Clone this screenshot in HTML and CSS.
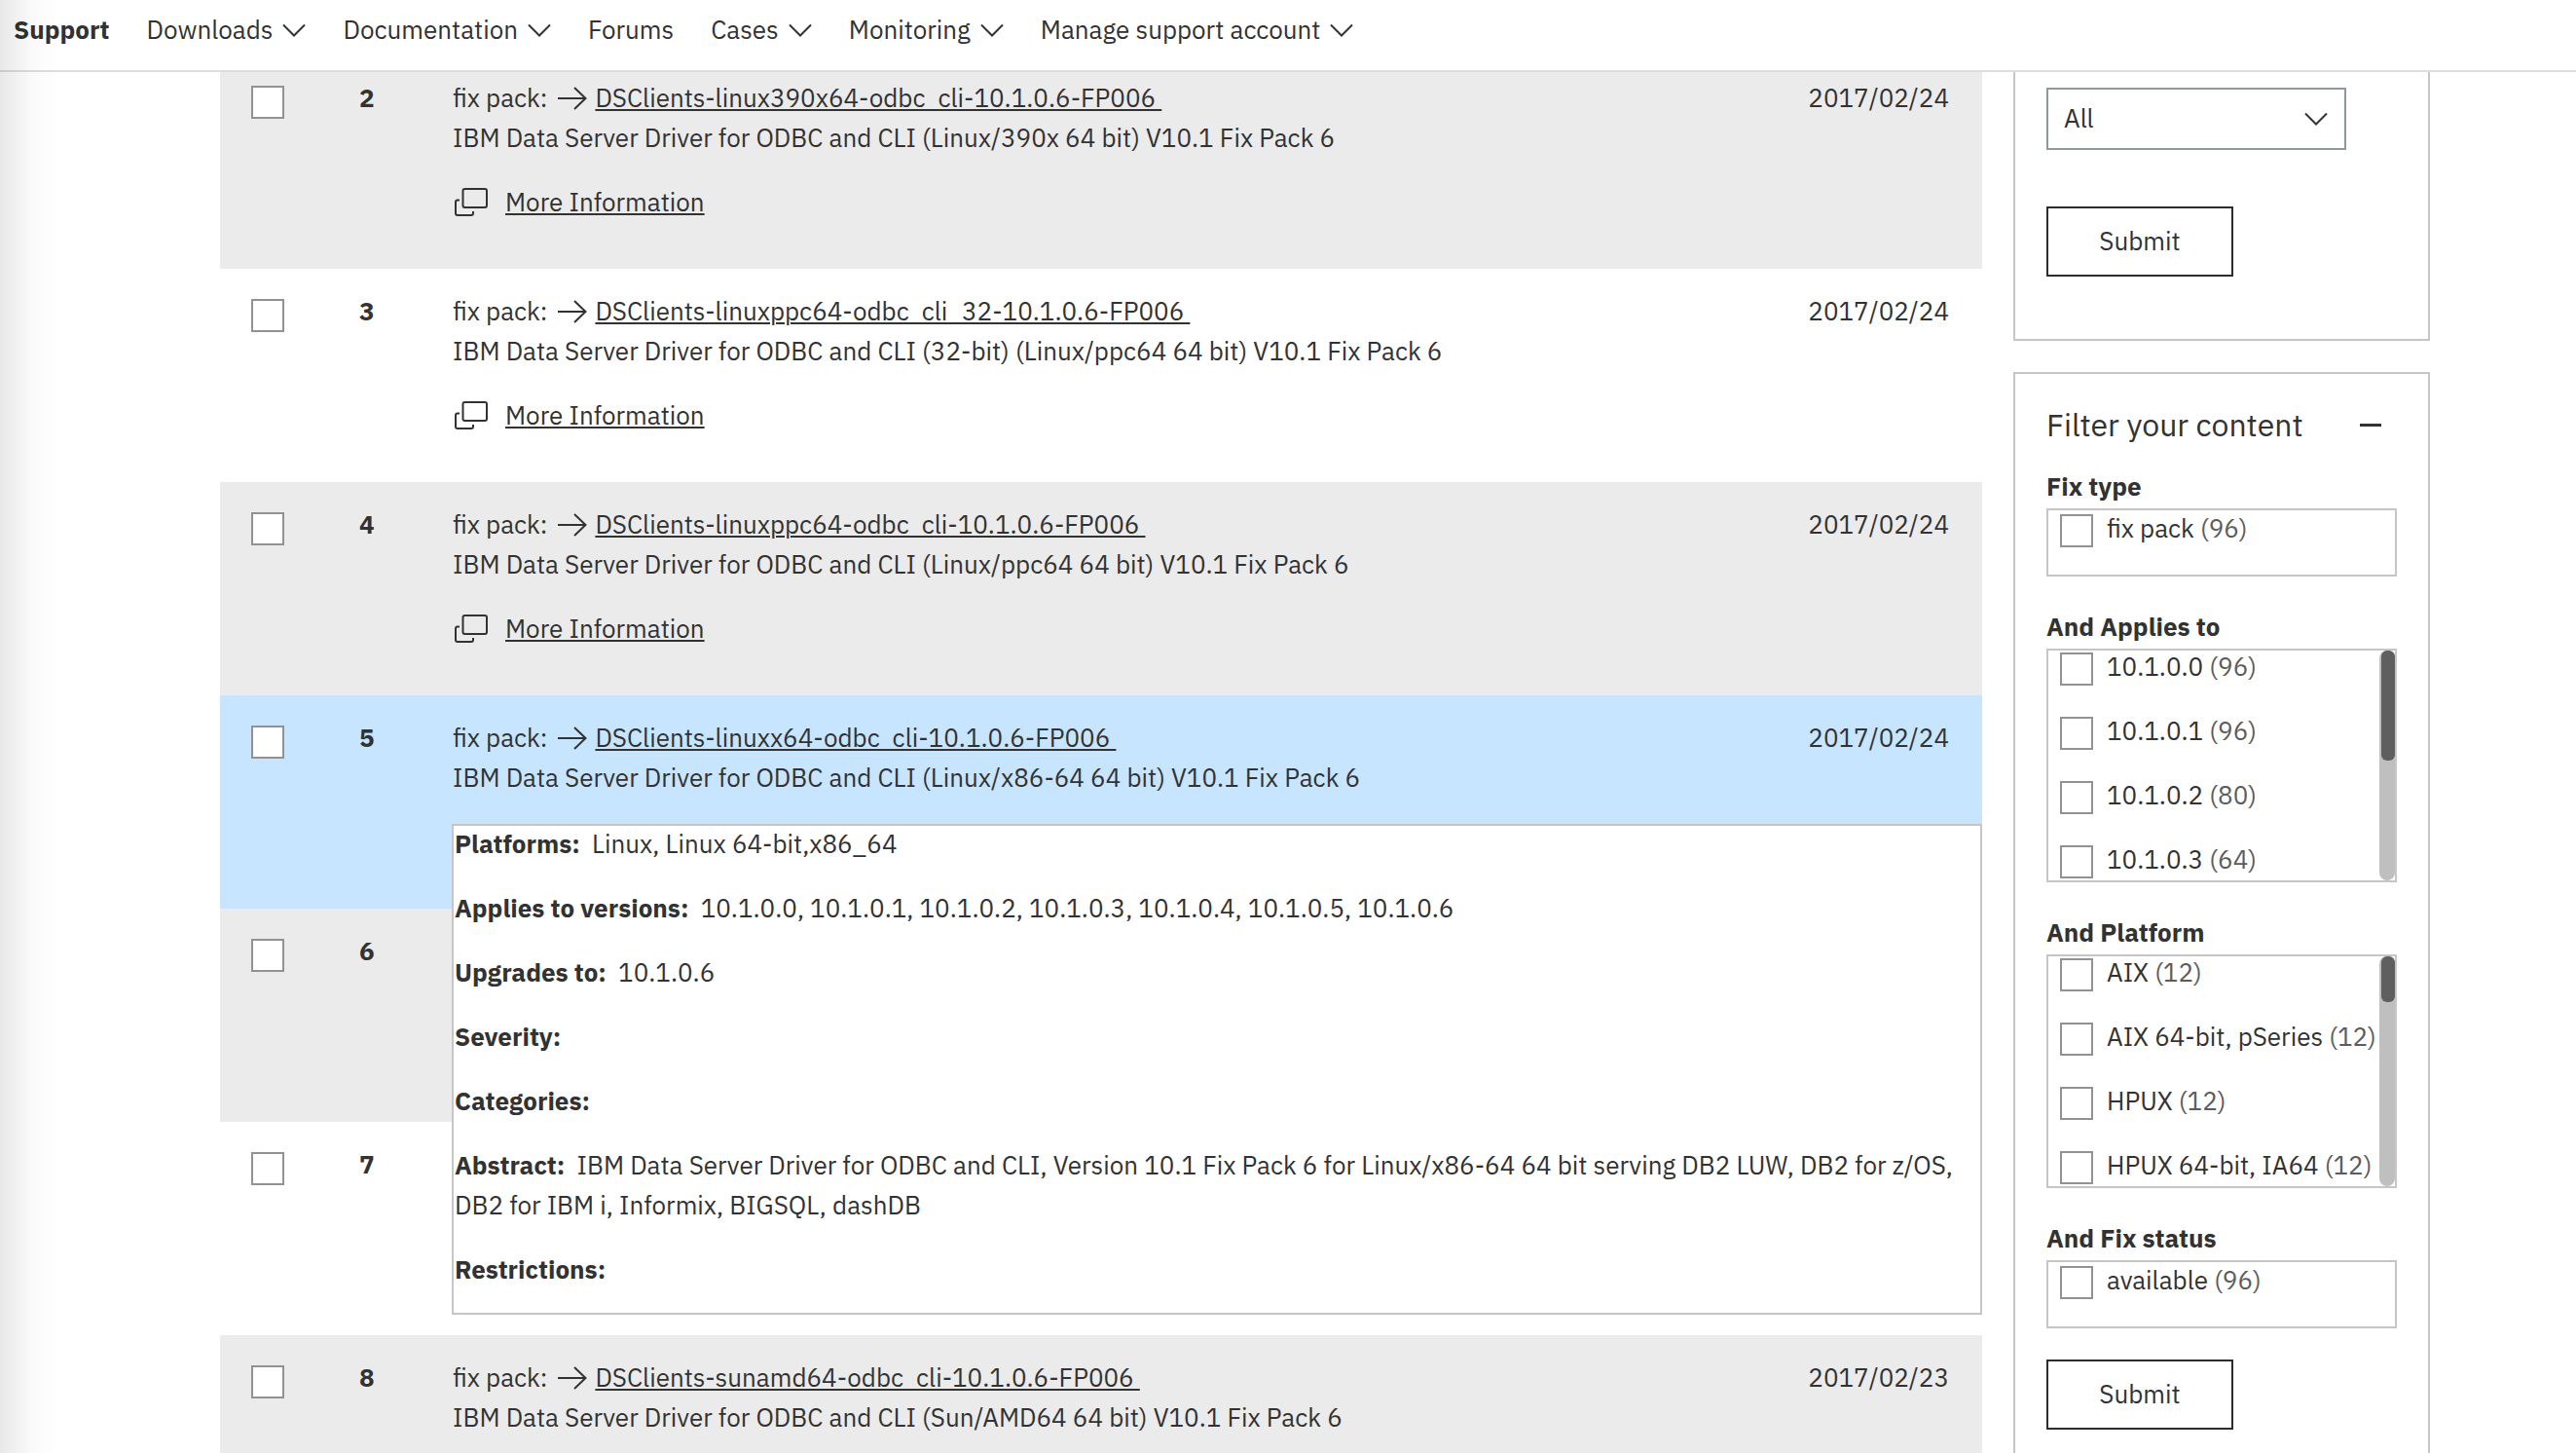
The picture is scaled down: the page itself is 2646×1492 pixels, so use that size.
FILE: index.html
```html
<!DOCTYPE html>
<html lang="en">
<head>
<meta charset="utf-8">
<meta name="viewport" content="width=device-width, initial-scale=1">
<title>Fix Central - Select fixes</title>
<link rel="stylesheet" href="styles.css">
</head>
<body>
<svg class="sprite" aria-hidden="true">
  <symbol id="chevron" viewBox="0 0 24 14"><path d="M1 1.5 12 12.5 23 1.5"/></symbol>
  <symbol id="arrow" viewBox="0 0 30 24"><path d="M0 12H28M17 1 28.500 12 17 23"/></symbol>
  <symbol id="windows" viewBox="0 0 34 29"><path d="M10.500 1H31a2 2 0 0 1 2 2V18a2 2 0 0 1-2 2H10.500a2 2 0 0 1-2-2V3a2 2 0 0 1 2-2ZM5 12.500H3a2 2 0 0 0-2 2V26a2 2 0 0 0 2 2H17a2 2 0 0 0 2-2V24"/></symbol>
</svg>

<header class="masthead">
  <nav class="nav" aria-label="Support">
    <a class="nav-link nav-title" href="#">Support</a>
    <button class="nav-link" type="button">Downloads <svg class="icon chevron"><use href="#chevron"/></svg></button>
    <button class="nav-link" type="button">Documentation <svg class="icon chevron"><use href="#chevron"/></svg></button>
    <a class="nav-link" href="#">Forums</a>
    <button class="nav-link" type="button">Cases <svg class="icon chevron"><use href="#chevron"/></svg></button>
    <button class="nav-link" type="button">Monitoring <svg class="icon chevron"><use href="#chevron"/></svg></button>
    <button class="nav-link" type="button">Manage support account <svg class="icon chevron"><use href="#chevron"/></svg></button>
  </nav>
</header>

<div class="page">
  <main class="results">
    <table class="fixes">
      <colgroup><col class="col-check"><col class="col-number"><col><col class="col-date"></colgroup>
      <tbody>
        <tr class="shaded">
          <td class="check"><input class="box" type="checkbox" aria-label="Select fix 2"></td>
          <td class="number">2</td>
          <td>
            <p class="fix">fix pack: <svg class="icon arrow"><use href="#arrow"/></svg><a href="#">DSClients-linux390x64-odbc_cli-10.1.0.6-FP006&nbsp;</a></p>
            <p>IBM Data Server Driver for ODBC and CLI (Linux/390x 64 bit) V10.1 Fix Pack 6</p>
            <p class="more"><svg class="icon windows"><use href="#windows"/></svg><a href="#">More Information</a></p>
          </td>
          <td class="date">2017/02/24</td>
        </tr>
        <tr>
          <td class="check"><input class="box" type="checkbox" aria-label="Select fix 3"></td>
          <td class="number">3</td>
          <td>
            <p class="fix">fix pack: <svg class="icon arrow"><use href="#arrow"/></svg><a href="#">DSClients-linuxppc64-odbc_cli_32-10.1.0.6-FP006&nbsp;</a></p>
            <p>IBM Data Server Driver for ODBC and CLI (32-bit) (Linux/ppc64 64 bit) V10.1 Fix Pack 6</p>
            <p class="more"><svg class="icon windows"><use href="#windows"/></svg><a href="#">More Information</a></p>
          </td>
          <td class="date">2017/02/24</td>
        </tr>
        <tr class="shaded">
          <td class="check"><input class="box" type="checkbox" aria-label="Select fix 4"></td>
          <td class="number">4</td>
          <td>
            <p class="fix">fix pack: <svg class="icon arrow"><use href="#arrow"/></svg><a href="#">DSClients-linuxppc64-odbc_cli-10.1.0.6-FP006&nbsp;</a></p>
            <p>IBM Data Server Driver for ODBC and CLI (Linux/ppc64 64 bit) V10.1 Fix Pack 6</p>
            <p class="more"><svg class="icon windows"><use href="#windows"/></svg><a href="#">More Information</a></p>
          </td>
          <td class="date">2017/02/24</td>
        </tr>
        <tr class="active">
          <td class="check"><input class="box" type="checkbox" aria-label="Select fix 5"></td>
          <td class="number">5</td>
          <td>
            <p class="fix">fix pack: <svg class="icon arrow"><use href="#arrow"/></svg><a href="#">DSClients-linuxx64-odbc_cli-10.1.0.6-FP006&nbsp;</a></p>
            <p>IBM Data Server Driver for ODBC and CLI (Linux/x86-64 64 bit) V10.1 Fix Pack 6</p>
            <div class="details">
              <p><strong>Platforms:</strong> Linux, Linux 64-bit,x86_64</p>
              <p><strong>Applies to versions:</strong> 10.1.0.0, 10.1.0.1, 10.1.0.2, 10.1.0.3, 10.1.0.4, 10.1.0.5, 10.1.0.6</p>
              <p><strong>Upgrades to:</strong> 10.1.0.6</p>
              <p><strong>Severity:</strong></p>
              <p><strong>Categories:</strong></p>
              <p><strong>Abstract:</strong> IBM Data Server Driver for ODBC and CLI, Version 10.1 Fix Pack 6 for Linux/x86-64 64 bit serving DB2 LUW, DB2 for z/OS, DB2 for IBM i, Informix, BIGSQL, dashDB</p>
              <p><strong>Restrictions:</strong></p>
            </div>
          </td>
          <td class="date">2017/02/24</td>
        </tr>
        <tr class="shaded">
          <td class="check"><input class="box" type="checkbox" aria-label="Select fix 6"></td>
          <td class="number">6</td>
          <td></td>
          <td class="date"></td>
        </tr>
        <tr>
          <td class="check"><input class="box" type="checkbox" aria-label="Select fix 7"></td>
          <td class="number">7</td>
          <td></td>
          <td class="date"></td>
        </tr>
        <tr class="shaded">
          <td class="check"><input class="box" type="checkbox" aria-label="Select fix 8"></td>
          <td class="number">8</td>
          <td>
            <p class="fix">fix pack: <svg class="icon arrow"><use href="#arrow"/></svg><a href="#">DSClients-sunamd64-odbc_cli-10.1.0.6-FP006&nbsp;</a></p>
            <p>IBM Data Server Driver for ODBC and CLI (Sun/AMD64 64 bit) V10.1 Fix Pack 6</p>
          </td>
          <td class="date">2017/02/23</td>
        </tr>
      </tbody>
    </table>
  </main>

  <aside class="sidebar">
    <form class="card card-sort">
      <div class="select-wrap">
        <select class="select" aria-label="Show"><option>All</option></select>
        <svg class="icon chevron"><use href="#chevron"/></svg>
      </div>
      <button class="submit" type="button">Submit</button>
    </form>

    <form class="card card-filter">
      <div class="card-head">
        <h2>Filter your content</h2>
        <button class="collapse" type="button" aria-label="Collapse"></button>
      </div>

      <fieldset class="group">
        <legend>Fix type</legend>
        <div class="options">
          <label class="option"><input class="box" type="checkbox"><span class="label">fix pack <span class="count">(96)</span></span></label>
        </div>
      </fieldset>

      <fieldset class="group">
        <legend>And Applies to</legend>
        <div class="options scrolling">
          <label class="option"><input class="box" type="checkbox"><span class="label">10.1.0.0 <span class="count">(96)</span></span></label>
          <label class="option"><input class="box" type="checkbox"><span class="label">10.1.0.1 <span class="count">(96)</span></span></label>
          <label class="option"><input class="box" type="checkbox"><span class="label">10.1.0.2 <span class="count">(80)</span></span></label>
          <label class="option"><input class="box" type="checkbox"><span class="label">10.1.0.3 <span class="count">(64)</span></span></label>
          <span class="track"><span class="thumb" style="height:48%"></span></span>
        </div>
      </fieldset>

      <fieldset class="group">
        <legend>And Platform</legend>
        <div class="options scrolling">
          <label class="option"><input class="box" type="checkbox"><span class="label">AIX <span class="count">(12)</span></span></label>
          <label class="option"><input class="box" type="checkbox"><span class="label">AIX 64-bit, pSeries <span class="count">(12)</span></span></label>
          <label class="option"><input class="box" type="checkbox"><span class="label">HPUX <span class="count">(12)</span></span></label>
          <label class="option"><input class="box" type="checkbox"><span class="label">HPUX 64-bit, IA64 <span class="count">(12)</span></span></label>
          <span class="track"><span class="thumb" style="height:20%"></span></span>
        </div>
      </fieldset>

      <fieldset class="group">
        <legend>And Fix status</legend>
        <div class="options">
          <label class="option"><input class="box" type="checkbox"><span class="label">available <span class="count">(96)</span></span></label>
        </div>
      </fieldset>

      <button class="submit" type="button">Submit</button>
    </form>
  </aside>
</div>
</body>
</html>
```
FILE: styles.css
```css
* {
  box-sizing: border-box;
}

body {
  margin: 0;
  height: 100vh;
  overflow: hidden;
  background: #fff;
  color: #323232;
  font: 26px/41px "IBM Plex Sans", Roboto, "Liberation Sans", sans-serif;
}

/* Soft shadow down the left edge of the window */
body::before {
  content: "";
  position: fixed;
  inset: 0 auto 0 0;
  z-index: 3;
  width: 60px;
  background: linear-gradient(to right, rgba(0, 0, 0, 0.09), rgba(0, 0, 0, 0.02) 55%, rgba(0, 0, 0, 0));
  pointer-events: none;
}

p,
h2 {
  margin: 0;
}

a {
  color: inherit;
}

button,
select {
  color: inherit;
  font: inherit;
}

.sprite {
  position: absolute;
  width: 0;
  height: 0;
}

.icon {
  flex: none;
  fill: none;
  stroke: currentColor;
  stroke-width: 2;
}

.chevron {
  width: 24px;
  height: 14px;
}

.arrow {
  width: 30px;
  height: 24px;
}

.windows {
  width: 34px;
  height: 29px;
}

/* Header */

.masthead {
  position: relative;
  z-index: 2;
  height: 74px;
  background: #fff;
  border-bottom: 2px solid #dedede;
}

.nav {
  display: flex;
  gap: 38px;
  padding: 10px 14px;
}

.nav-link {
  display: flex;
  align-items: center;
  gap: 10px;
  padding: 0;
  border: 0;
  background: none;
  text-decoration: none;
}

.nav-title {
  font-weight: 700;
}

/* Page */

.page {
  display: flex;
  align-items: flex-start;
  gap: 32px;
  margin-top: -17px;
  padding: 0 150px 0 226px;
}

.results {
  flex: 1;
}

.fixes {
  width: 100%;
  border-collapse: collapse;
  table-layout: fixed;
}

.col-check {
  width: 143px;
}

.col-number {
  width: 96px;
}

.col-date {
  width: 220px;
}

.fixes tr {
  position: relative;
  height: 219px;
}

.fixes td {
  padding: 23px 0 0;
  vertical-align: top;
}

.fixes .check {
  padding: 31px 0 0 32px;
}

.fixes .number {
  font-weight: 700;
}

.fixes .date {
  padding-right: 34px;
  text-align: right;
}

.shaded {
  background: #ebebeb;
}

.active {
  background: #c7e5ff;
}

.fix {
  display: flex;
  align-items: center;
  gap: 8px;
}

.fix .arrow {
  margin-left: 3px;
}

.fixes a {
  text-decoration-thickness: 2px;
  text-underline-offset: 2px;
}

.more {
  display: flex;
  align-items: center;
  gap: 18px;
  margin-top: 25px;
  padding-left: 2px;
}

.box {
  appearance: none;
  display: block;
  flex: none;
  width: 34px;
  height: 34px;
  margin: 0;
  border: 2px solid #929292;
  border-radius: 0;
  background: #fff;
}

/* Details popover, laid over the rows below */
.details {
  position: absolute;
  z-index: 1;
  top: 132px;
  right: 0;
  left: 238px;
  padding: 0 24px 24px 1px;
  border: 2px solid #c6c6c6;
  background: #fff;
}

.details p {
  margin-bottom: 25px;
}

.details p:first-child {
  margin-top: -2px;
}

.details p:last-child {
  margin-bottom: 0;
}

.details strong {
  margin-right: 6px;
}

/* Sidebar */

.sidebar {
  display: flex;
  flex: none;
  flex-direction: column;
  gap: 32px;
  width: 428px;
}

.card {
  padding: 32px;
  border: 2px solid #c6c6c6;
}

.card-sort {
  padding: 31px 32px 64px;
}

.select-wrap {
  display: flex;
  align-items: center;
  width: 308px;
  margin-bottom: 58px;
}

.select {
  appearance: none;
  width: 100%;
  height: 64px;
  padding: 0 16px 2px;
  border: 2px solid #8f9998;
  border-radius: 0;
  background: #fff;
}

.select-wrap .chevron {
  margin-left: -43px;
  pointer-events: none;
}

.submit {
  width: 192px;
  height: 72px;
  padding: 0 0 2px;
  border: 2px solid #2d2d2d;
  background: #fff;
}

.card-head {
  display: flex;
  align-items: center;
  justify-content: space-between;
  height: 41px;
}

.card-head h2 {
  font-size: 32px;
  font-weight: 400;
}

.collapse {
  width: 22px;
  height: 3px;
  margin-right: 16px;
  padding: 0;
  border: 0;
  background: #323232;
}

.group {
  min-width: 0;
  margin: 0;
  padding: 0;
  border: 0;
}

.group legend {
  padding: 31px 0 2px;
  font-weight: 700;
}

.card-head + .group legend {
  padding-top: 22px;
}

.options {
  position: relative;
  display: flex;
  flex-direction: column;
  gap: 32px;
  padding: 4px 12px 28px;
  border: 2px solid #c6c6c6;
}

.option {
  display: flex;
  align-items: center;
  gap: 14px;
  height: 34px;
  white-space: nowrap;
}

.label {
  padding-bottom: 6px;
}

.scrolling {
  height: 240px;
  padding: 2px 12px;
}

.count {
  color: #5c5c5c;
}

.track {
  position: absolute;
  top: 0;
  right: 0;
  bottom: 0;
  width: 16px;
  padding-left: 2px;
  border-radius: 8px;
  background: #bfbfbf;
}

.thumb {
  display: block;
  border-radius: 6px;
  background: #5f5f5f;
}

.group + .submit {
  margin-top: 32px;
}
```
